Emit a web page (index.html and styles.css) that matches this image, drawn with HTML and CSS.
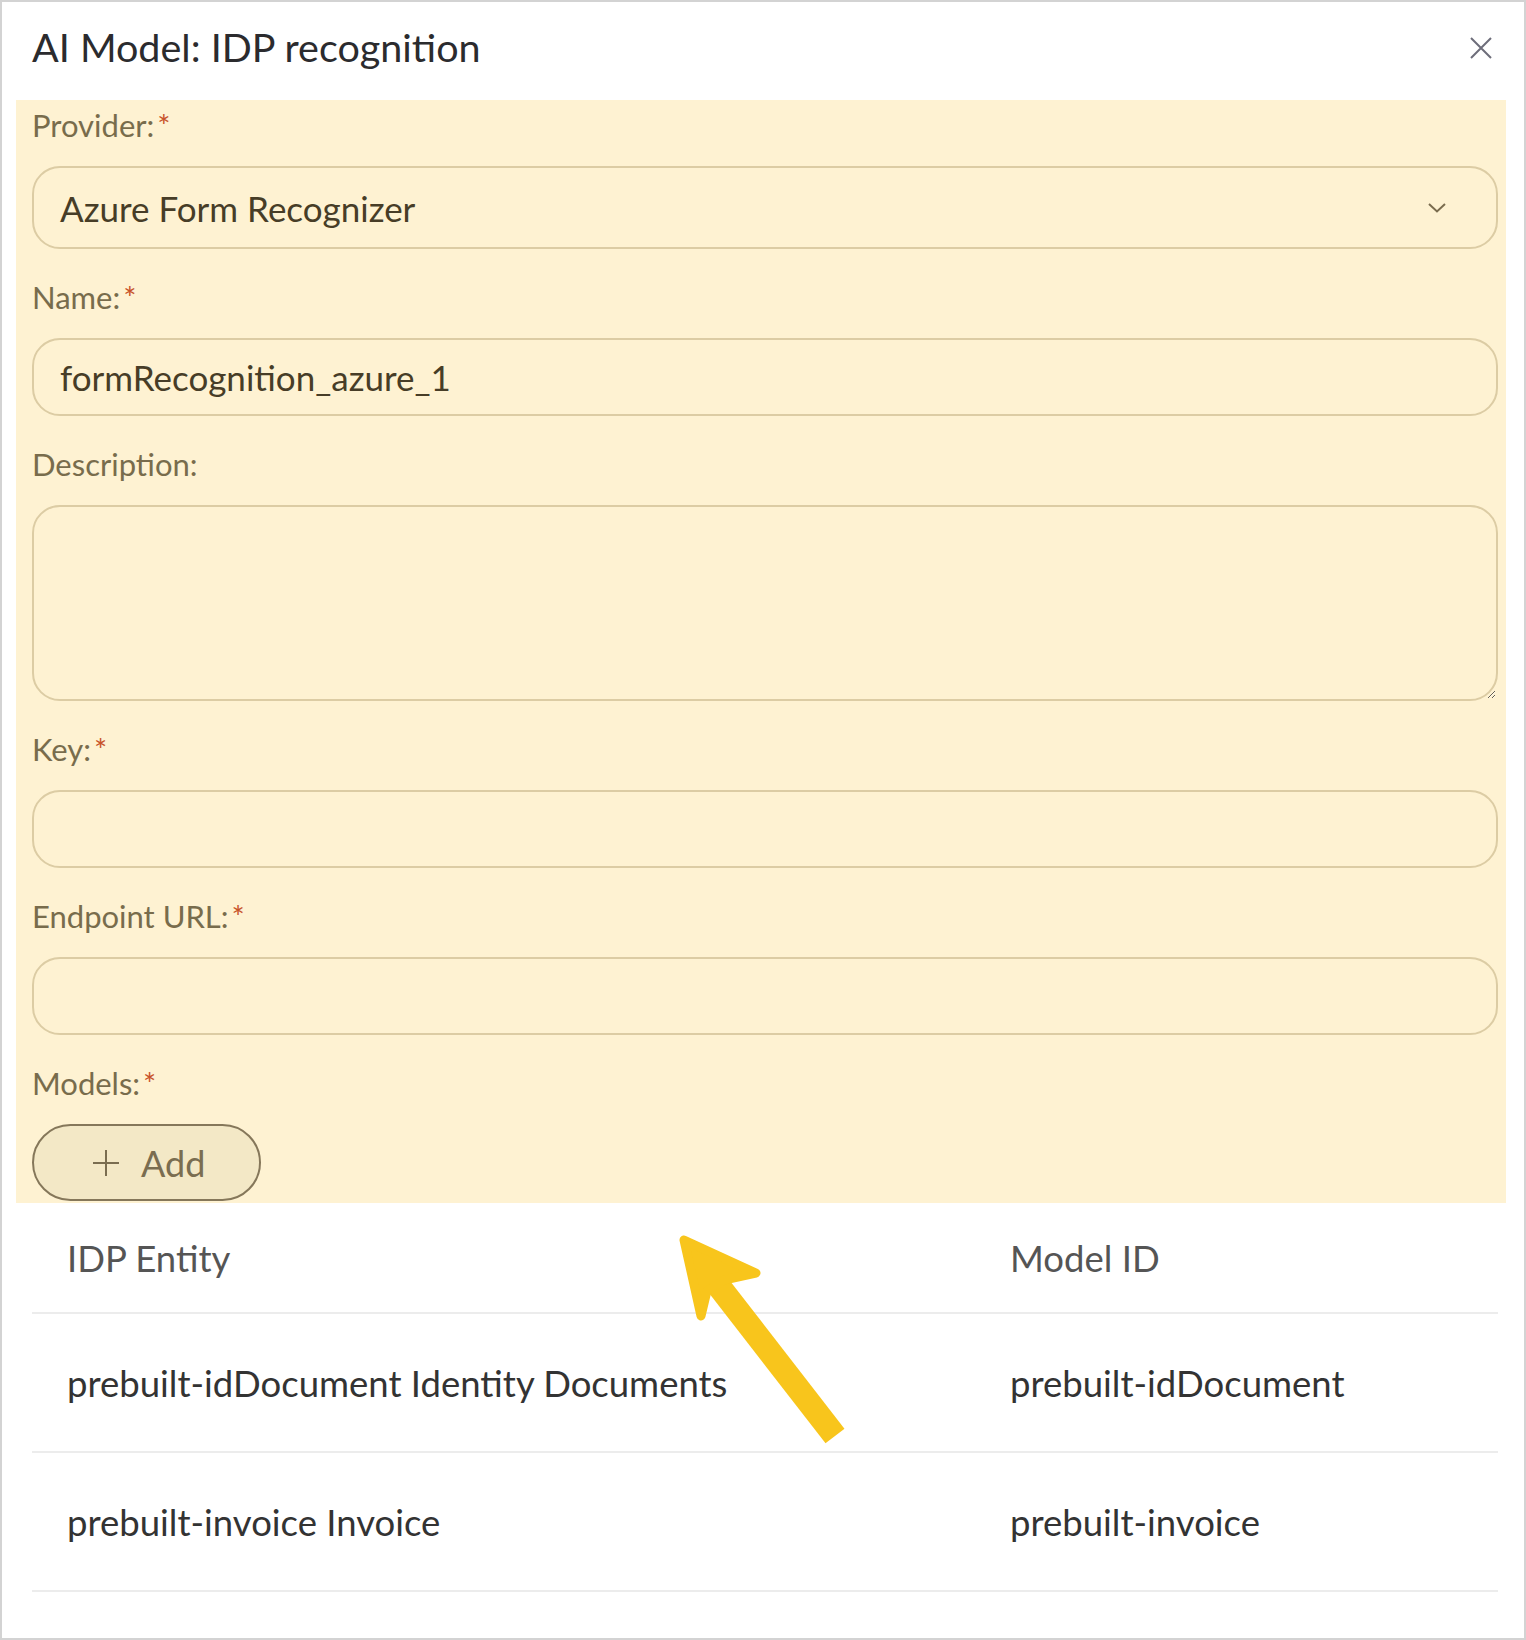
FILE: index.html
```html
<!DOCTYPE html>
<html>
<head>
<meta charset="utf-8">
<title>AI Model: IDP recognition</title>
<link rel="stylesheet" href="styles.css">
</head>
<body>

<div class="dialog">

	<div class="dialog-head">
		<h2 class="dialog-title">AI Model: IDP recognition</h2>
		<button class="close" type="button" aria-label="Close">
			<svg width="22" height="22" viewBox="0 0 22 22">
				<path d="M1 1 L21 21 M21 1 L1 21" stroke="#6d6d7a" stroke-width="2" fill="none"/>
			</svg>
		</button>
	</div>

	<form class="form">

		<div class="field">
			<label class="label">Provider:<span class="req">*</span></label>
			<div class="select">
				<span>Azure Form Recognizer</span>
				<svg width="18" height="10" viewBox="0 0 18 10">
					<path d="M1 1 L9 8.5 L17 1" stroke="#7a6c4e" stroke-width="2" fill="none"/>
				</svg>
			</div>
		</div>

		<div class="field">
			<label class="label">Name:<span class="req">*</span></label>
			<input class="input" type="text" value="formRecognition_azure_1">
		</div>

		<div class="field">
			<label class="label">Description:</label>
			<textarea class="input area"></textarea>
		</div>

		<div class="field">
			<label class="label">Key:<span class="req">*</span></label>
			<input class="input" type="text">
		</div>

		<div class="field">
			<label class="label">Endpoint URL:<span class="req">*</span></label>
			<input class="input" type="text">
		</div>

		<div class="field">
			<label class="label">Models:<span class="req">*</span></label>
			<button class="add" type="button">
				<svg class="plus" width="26" height="26" viewBox="0 0 26 26">
					<path d="M13 0 V26 M0 13 H26" stroke="#7a6d50" stroke-width="2" fill="none"/>
				</svg>
				Add
			</button>
		</div>

	</form>

	<div class="models">
		<div class="row head">
			<div class="cell">IDP Entity</div>
			<div class="cell">Model ID</div>
		</div>
		<div class="row">
			<div class="cell">prebuilt-idDocument Identity Documents</div>
			<div class="cell">prebuilt-idDocument</div>
		</div>
		<div class="row">
			<div class="cell">prebuilt-invoice Invoice</div>
			<div class="cell">prebuilt-invoice</div>
		</div>
	</div>

	<!-- pointer drawn over the table -->
	<svg class="pointer" width="210" height="230" viewBox="0 0 210 230">
		<path d="M57 30 L195 208" stroke="#f8c51c" stroke-width="24" fill="none"/>
		<path d="M44 12 L116 45 L84 52 L67 63 L61 88 Z" fill="#f8c51c" stroke="#f8c51c" stroke-width="9" stroke-linejoin="round"/>
	</svg>

</div>

</body>
</html>
```

FILE: styles.css
```css
body {
	margin : 0;
	background-color : #ffffff;
	font-family : "Lato", "Liberation Sans", sans-serif;
}

.dialog {
	position : relative;
	height : 1640px;
	box-sizing : border-box;
	border : 2px solid #d3d3d3;
	background-color : #ffffff;
}

.dialog-head {
	display : flex;
	align-items : center;
	justify-content : space-between;
	height : 98px;
	padding : 0 32px 0 30px;
}

.dialog-title {
	margin : 0;
	font-size : 39.5px;
	font-weight : 400;
	color : #2b2b2e;
	line-height : 1;
	padding-bottom : 8px;
}

.close {
	border : none;
	background : none;
	padding : 0;
	display : flex;
	margin-bottom : 6px;
}

/* highlighted form block */
.form {
	margin : 0 18px 0 14px;
	padding : 7px 8px 2px 16px;
	background-color : #fef2d2;
}

.field + .field {
	margin-top : 30px;
}

.label {
	display : block;
	height : 36px;
	line-height : 36px;
	font-size : 31px;
	color : #786c4c;
	margin-bottom : 23px;
}

.req {
	color : #c8532a;
	margin-left : 3px;
}

.select {
	display : flex;
	align-items : center;
	justify-content : space-between;
	height : 83px;
	box-sizing : border-box;
	padding : 0 50px 0 26px;
	border : 2px solid #dccca4;
	border-radius : 28px;
	font-size : 35px;
	color : #473d27;
}

.input {
	display : block;
	width : 100%;
	height : 78px;
	box-sizing : border-box;
	padding : 0 26px;
	border : 2px solid #dccca4;
	border-radius : 28px;
	background-color : transparent;
	font-family : inherit;
	font-size : 35px;
	color : #473d27;
	outline : none;
}

.area {
	height : 196px;
	resize : vertical;
}

.add {
	display : flex;
	align-items : center;
	width : 229px;
	height : 77px;
	box-sizing : border-box;
	padding : 0 0 0 59px;
	border : 2px solid #85775a;
	border-radius : 40px;
	background-color : #f3e8c6;
	font-family : inherit;
	font-size : 36px;
	color : #7a6d50;
}

.plus {
	margin-right : 22px;
}

/* models table */
.models {
	margin : 0 26px 0 30px;
}

.row {
	display : grid;
	grid-template-columns : 943px 1fr;
	align-items : center;
	height : 139px;
	box-sizing : border-box;
	border-bottom : 2px solid #ececec;
	font-size : 36.5px;
	color : #333333;
}

.row.head {
	height : 111px;
	color : #555555;
}

.cell {
	padding : 0 35px;
}

.pointer {
	position : absolute;
	left : 638px;
	top : 1226px;
}
```
